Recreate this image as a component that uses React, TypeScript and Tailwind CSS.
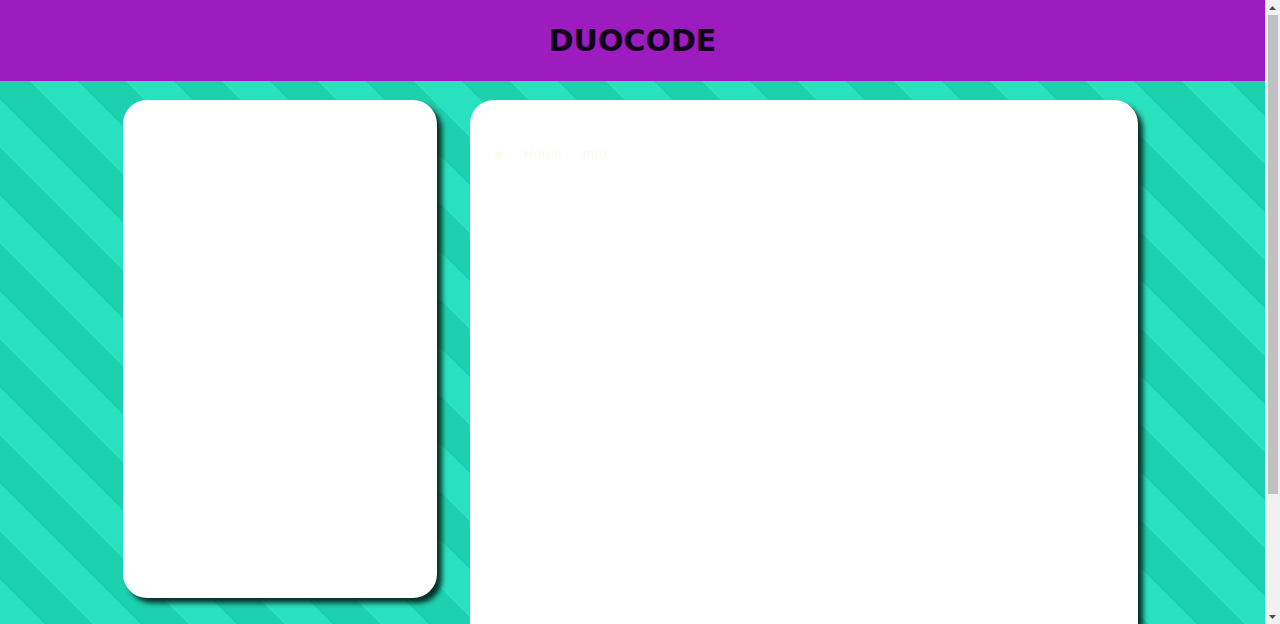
function Scrollbar() {
  return (
    <div className="w-[15px] h-full bg-[#f1f1f1] flex flex-col items-center shrink-0">
      <div className="h-[15px] w-full flex items-center justify-center">
        <svg width="7" height="4" viewBox="0 0 7 4">
          <path d="M3.5 0 L7 4 L0 4 Z" fill="#505050" />
        </svg>
      </div>
      <div className="w-[10px] h-[479px] bg-[#c1c1c1]" />
      <div className="flex-1" />
      <div className="h-[15px] w-full flex items-center justify-center">
        <svg width="7" height="4" viewBox="0 0 7 4">
          <path d="M0 0 L7 0 L3.5 4 Z" fill="#505050" />
        </svg>
      </div>
    </div>
  );
}

export default function App() {
  return (
    <div className="h-screen w-full flex overflow-hidden font-['DejaVu_Sans',sans-serif]">
      <div className="flex-1 min-w-0 h-full overflow-hidden">
        {/* Header */}
        <header className="h-[81px] bg-[#9c1cc0] flex items-center justify-center">
          <h1 className="text-[30px] font-bold text-[#12001a]">DUOCODE</h1>
        </header>

        {/* Striped stage */}
        <main className="bg-[linear-gradient(45deg,#28e2bf_25%,#1dd0ae_25%,#1dd0ae_50%,#28e2bf_50%,#28e2bf_75%,#1dd0ae_75%,#1dd0ae)] bg-size-[96px_96px] bg-position-[30px_0px] flex justify-center gap-[33px] pt-[19px] pb-5 pr-1">
          <div className="w-[314px] h-[498px] bg-white rounded-[24px] shadow-[5px_5px_5px_rgba(0,20,15,0.85)]" />
          <div className="w-[668px] h-[650px] bg-white rounded-[24px] shadow-[5px_5px_5px_rgba(0,20,15,0.85)] px-6 pt-11">
            <div className="flex gap-5 text-[13px] text-[#fdfbec]">
              <span>◆</span>
              <span>Home</span>
              <span>Info</span>
            </div>
          </div>
        </main>
      </div>
      <Scrollbar />
    </div>
  );
}
